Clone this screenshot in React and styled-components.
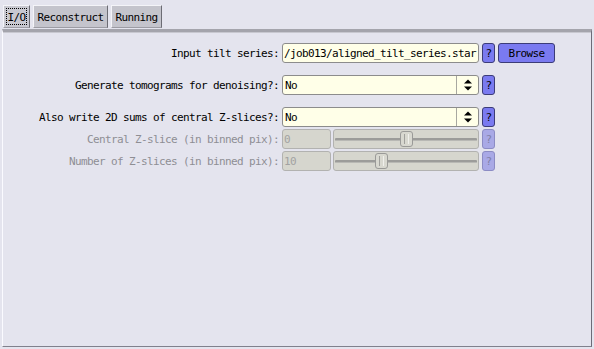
import React from "react";
import styled, { createGlobalStyle } from "styled-components";

const Global = createGlobalStyle`
  html, body { margin: 0; padding: 0; background: #e4e4ee; }
  body {
    font-family: "DejaVu Sans Mono", monospace;
    font-size: 11px;
    letter-spacing: -0.62px;
    color: #000;
  }
  * { box-sizing: border-box; }
`;

const Window = styled.div`
  width: 594px;
  height: 349px;
  display: flex;
  flex-direction: column;
  padding: 5px 2px 2px 2px;
`;

const TabBar = styled.div`
  display: flex;
  gap: 3px;
  padding-left: 1px;
  height: 23px;
`;

const Tab = styled.div`
  position: relative;
  width: ${(p) => p.$w}px;
  height: 23px;
  display: flex;
  align-items: center;
  justify-content: center;
  background: ${(p) => (p.$active ? "#c8c8d0" : "#c4c4cc")};
  border-top: 1px solid #f4f4f8;
  border-left: 1px solid #f4f4f8;
  border-right: 1px solid #6c6c74;
  border-bottom: 1px solid #9c9ca4;
  padding-top: 1px;
`;

const Focus = styled.span`
  position: absolute;
  inset: 2px;
  border: 1px dotted #000;
  pointer-events: none;
`;

const Panel = styled.div`
  flex: 1;
  background: #e4e4ee;
  border-top: 3px solid #a4a4ac;
  box-shadow: inset 0 1px 0 #c8c8d0;
  border-left: 1px solid #fafaff;
  border-right: 1px solid #6c6c78;
  border-bottom: 1px solid #80808c;
  margin-top: 1px;
  padding-top: 11px;
  display: flex;
  flex-direction: column;
  gap: 12px;
`;

const Section = styled.div`
  display: flex;
  flex-direction: column;
  gap: 2px;
`;

const Row = styled.div`
  display: flex;
  align-items: center;
  height: 20px;
`;

const Label = styled.div`
  width: 276px;
  margin-right: 3px;
  text-align: right;
  white-space: nowrap;
  color: ${(p) => (p.$disabled ? "#8e8e94" : "#000")};
`;

const TextField = styled.div`
  width: ${(p) => p.$w}px;
  height: 20px;
  background: ${(p) => (p.$disabled ? "#d6d6ce" : "#ffffe8")};
  border: 1px solid ${(p) => (p.$disabled ? "#b2b2b0" : "#8c8c8c")};
  border-radius: 3px;
  display: flex;
  align-items: center;
  padding-left: 1px;
  overflow: hidden;
  white-space: nowrap;
  color: ${(p) => (p.$disabled ? "#a2a2a2" : "#000")};
`;

const SelectBox = styled.div`
  width: 197px;
  height: 20px;
  background: #ffffe8;
  border: 1px solid #8c8c8c;
  border-radius: 3px;
  display: flex;
  align-items: stretch;
`;

const SelectText = styled.div`
  flex: 1;
  display: flex;
  align-items: center;
  padding-left: 2px;
  border-right: 1px solid #a8a8a0;
`;

const SelectArrow = styled.div`
  width: 21px;
  display: flex;
  align-items: center;
  justify-content: center;
`;

const HelpButton = styled.div`
  width: 13px;
  height: 20px;
  margin-left: ${(p) => p.$ml ?? 3}px;
  background: ${(p) => (p.$disabled ? "#a9a9e6" : "#7a7af0")};
  border: 1px solid ${(p) => (p.$disabled ? "#8c8cc4" : "#3c3c78")};
  border-radius: 3px;
  display: flex;
  align-items: center;
  justify-content: center;
  color: ${(p) => (p.$disabled ? "#8080a8" : "#000")};
`;

const BrowseButton = styled.div`
  width: 57px;
  height: 20px;
  margin-left: 3px;
  background: #7a7af0;
  border: 1px solid #3c3c78;
  border-radius: 3px;
  display: flex;
  align-items: center;
  justify-content: center;
`;

const SliderBox = styled.div`
  position: relative;
  width: 146px;
  height: 20px;
  margin-left: 2px;
  background: #d6d6ce;
  border: 1px solid #b2b2b0;
  border-radius: 3px;
`;

const Track = styled.div`
  position: absolute;
  left: 1px;
  right: 1px;
  top: 8px;
  height: 3px;
  background: #9c9c9a;
  border-radius: 1px;
  border-bottom: 1px solid #b8b8b4;
`;

const Knob = styled.div`
  position: absolute;
  top: 1px;
  width: 13px;
  height: 16px;
  background: #d8d8d0;
  border: 1px solid #9a9a98;
  border-radius: 3px;
  display: flex;
  justify-content: center;
  &::after {
    content: "";
    width: 3px;
    margin-top: 2px;
    height: 10px;
    border-left: 1px solid #a0a09c;
    border-right: 1px solid #f0f0ec;
  }
`;

function Arrows() {
  return (
    <svg width="8" height="12" viewBox="0 0 8 12">
      <polygon points="4,0.5 8,4.5 0,4.5" fill="#000" />
      <polygon points="0,7.5 8,7.5 4,11.5" fill="#000" />
    </svg>
  );
}

function Slider({ min, max, value }) {
  const usable = 146 - 2 - 13;
  const left = Math.round(((value - min) / (max - min)) * usable);
  return (
    <SliderBox>
      <Track />
      <Knob style={{ left: left }} />
    </SliderBox>
  );
}

export default function App() {
  return (
    <>
      <Global />
      <Window>
        <TabBar>
          <Tab $w={27} $active>
            I/O
            <Focus />
          </Tab>
          <Tab $w={75}>Reconstruct</Tab>
          <Tab $w={51}>Running</Tab>
        </TabBar>
        <Panel>
          <Section>
            <Row>
              <Label>Input tilt series:</Label>
              <TextField $w={197}>/job013/aligned_tilt_series.star</TextField>
              <HelpButton>?</HelpButton>
              <BrowseButton>Browse</BrowseButton>
            </Row>
          </Section>
          <Section>
            <Row>
              <Label>Generate tomograms for denoising?:</Label>
              <SelectBox>
                <SelectText>No</SelectText>
                <SelectArrow>
                  <Arrows />
                </SelectArrow>
              </SelectBox>
              <HelpButton>?</HelpButton>
            </Row>
          </Section>
          <Section>
            <Row>
              <Label>Also write 2D sums of central Z-slices?:</Label>
              <SelectBox>
                <SelectText>No</SelectText>
                <SelectArrow>
                  <Arrows />
                </SelectArrow>
              </SelectBox>
              <HelpButton>?</HelpButton>
            </Row>
            <Row>
              <Label $disabled>Central Z-slice (in binned pix):</Label>
              <TextField $w={49} $disabled>0</TextField>
              <Slider min={-50} max={50} value={0} />
              <HelpButton $disabled $ml={3}>?</HelpButton>
            </Row>
            <Row>
              <Label $disabled>Number of Z-slices (in binned pix):</Label>
              <TextField $w={49} $disabled>10</TextField>
              <Slider min={1} max={30} value={10} />
              <HelpButton $disabled $ml={3}>?</HelpButton>
            </Row>
          </Section>
        </Panel>
      </Window>
    </>
  );
}
